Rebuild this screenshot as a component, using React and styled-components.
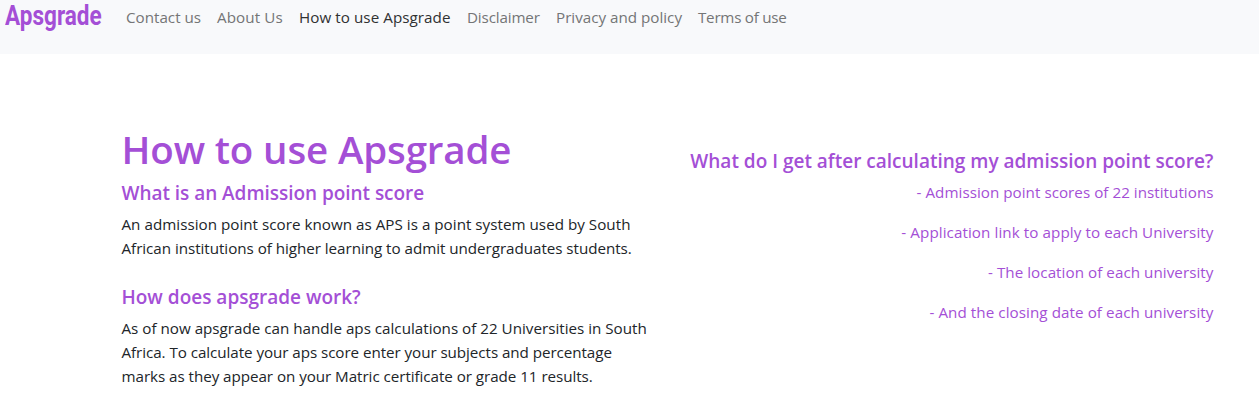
import React from "react";
import styled, { createGlobalStyle } from "styled-components";

const Global = createGlobalStyle`
  * { box-sizing: border-box; }
  html, body { margin: 0; background: #fff; overflow: hidden; }
  body { font-family: "Open Sans", "Noto Sans", sans-serif; font-size: 15.2px; font-weight: 400; line-height: 24px; color: #212529; }
`;
const Page = styled.div`height: 407px; overflow: hidden;`;
const Navbar = styled.nav`
  display: flex; align-items: flex-start; height: 54px; padding-left: 5px; background: #f8f9fb;
`;
const Brand = styled.a`
  width: 97px; margin-right: 24px; color: #a44fd6; font: 700 28px/31px Roboto, sans-serif; white-space: nowrap;
  span { display: inline-block; transform: scaleX(0.805); transform-origin: 0 50%; }
`;
const Links = styled.ul`
  display: flex; gap: 16px; margin: 0; padding: 5px 0 0; list-style: none;
`;
const NavItem = styled.li`
  width: ${(p) => p.$width}px; white-space: nowrap; color: ${(p) => (p.$active ? "#303132" : "#747576")};
`;
const Line = styled.span`
  display: block; white-space: nowrap; letter-spacing: ${(p) => p.$track || 0}px;
`;
const Main = styled.main`
  display: grid; grid-template-columns: 546px 546px; padding: 71px 0 0 121.5px;
`;
const Title = styled.h1`
  margin: 0 0 8px; color: #a44fd6; font-size: 38.5px; font-weight: 600; line-height: 48px;
`;
const Heading = styled.h2`
  margin: 0 0 7px; color: #a44fd6; font-size: 19px; font-weight: 600; line-height: 24px;
`;
const Paragraph = styled.p`margin: 0 0 25px;`;
const Benefits = styled.section`
  padding-top: 24px; color: #a44fd6;
  ${Line} { display: flex; justify-content: flex-end; }
`;
const List = styled.div`display: grid; gap: 16px;`;

const links = [
  ["Contact us", 75, 0], ["About Us", 66, 0.1], ["How to use Apsgrade", 152, 0.06],
  ["Disclaimer", 73, -0.15], ["Privacy and policy", 126, 0], ["Terms of use", 90, -0.25],
];
const benefits = [
  ["- Admission point scores of 22 institutions", 0.03],
  ["- Application link to apply to each University", 0.08],
  ["- The location of each university", 0.05],
  ["- And the closing date of each university", 0.07],
];

export default function App() {
  return (
    <Page>
      <Global />
      <Navbar>
        <Brand><span>Apsgrade</span></Brand>
        <Links>
          {links.map(([label, width, track]) => (
            <NavItem key={label} $width={width} $active={label.startsWith("How")}><Line $track={track}>{label}</Line></NavItem>
          ))}
        </Links>
      </Navbar>
      <Main>
        <section>
          <Title><Line $track={-0.14}>How to use Apsgrade</Line></Title>
          <Heading><Line $track={-0.04}>What is an Admission point score</Line></Heading>
          <Paragraph>
            <Line $track={0.02}>An admission point score known as APS is a point system used by South</Line>
            <Line $track={-0.04}>African institutions of higher learning to admit undergraduates students.</Line>
          </Paragraph>
          <Heading><Line>How does apsgrade work?</Line></Heading>
          <Paragraph>
            <Line>As of now apsgrade can handle aps calculations of 22 Universities in South</Line>
            <Line $track={-0.06}>Africa. To calculate your aps score enter your subjects and percentage</Line>
            <Line $track={-0.05}>marks as they appear on your Matric certificate or grade 11 results.</Line>
          </Paragraph>
        </section>
        <Benefits>
          <Heading><Line>What do I get after calculating my admission point score?</Line></Heading>
          <List>
            {benefits.map(([text, track]) => <Line key={text} $track={track}>{text}</Line>)}
          </List>
        </Benefits>
      </Main>
    </Page>
  );
}
